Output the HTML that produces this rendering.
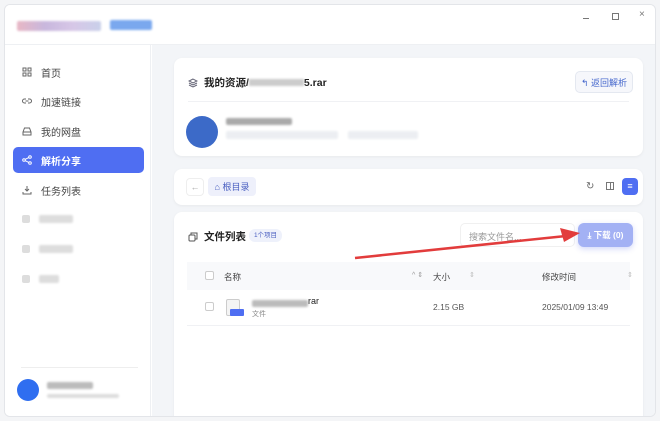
<!DOCTYPE html>
<html><head><meta charset="utf-8"><style>
*{box-sizing:border-box;margin:0;padding:0}
html,body{overflow:hidden}
body{width:660px;height:421px;background:#f4f5f7;font-family:"Liberation Sans","Noto Sans CJK SC",sans-serif;position:relative;color:#333}
.win{position:absolute;left:4px;top:4px;width:652px;height:413px;background:#fff;border:1px solid #e3e5e9;border-radius:6px;overflow:hidden}
.title{position:absolute;left:0;top:0;width:100%;height:40px;border-bottom:1px solid #eef0f3;background:#fff}
.blur{position:absolute;border-radius:2px}
.side{position:absolute;left:0;top:40px;width:146px;bottom:0;background:#fff;border-right:1px solid #eef0f3}
.nav{position:absolute;left:8px;width:131px;height:26px;border-radius:5px;font-size:10px;color:#444;display:flex;align-items:center;padding-left:9px}
.nav svg{margin-right:9px}
.nav.act{background:#4f6ef2;color:#fff;font-weight:bold}
.main{position:absolute;left:147px;top:40px;right:0;bottom:0;background:#f3f5f8;overflow:hidden}
.card{position:absolute;left:22px;width:469px;background:#fff;border-radius:8px;box-shadow:0 1px 3px rgba(0,0,0,.05)}
.th{font-size:8.5px;color:#444}
</style></head><body>
<div class="win">
 <div class="title">
  <div class="blur" style="left:12px;top:16px;width:84px;height:10px;background:linear-gradient(90deg,#e8b7c5,#c8b7dd,#d7c7e7,#c9d0ea);filter:blur(1px)"></div>
  <div class="blur" style="left:105px;top:15px;width:42px;height:10px;background:#7aa8ee;filter:blur(1px)"></div>
  <div style="position:absolute;left:578px;top:13px;width:6px;border-top:1px solid #777"></div>
  <div style="position:absolute;left:607px;top:8px;width:7px;height:7px;border:1px solid #777"></div>
  <div style="position:absolute;left:634px;top:4px;font-size:10px;color:#777">×</div>
 </div>
 <div class="side">
  <div class="nav" style="top:14px"><svg width="10" height="10" viewBox="0 0 10 10" fill="none" stroke="#666" stroke-width="1"><rect x="1" y="1" width="3" height="3"/><rect x="6" y="1" width="3" height="3"/><rect x="1" y="6" width="3" height="3"/><rect x="6" y="6" width="3" height="3"/></svg>首页</div>
  <div class="nav" style="top:43px"><svg width="10" height="10" viewBox="0 0 10 10" fill="none" stroke="#666" stroke-width="1"><path d="M4 3H2.5a2 2 0 000 4H4M6 3h1.5a2 2 0 010 4H6M3.5 5h3"/></svg>加速链接</div>
  <div class="nav" style="top:73px"><svg width="10" height="10" viewBox="0 0 10 10" fill="none" stroke="#666" stroke-width="1"><path d="M1 6l1.5-4h5L9 6v3H1zM1 6h8"/></svg>我的网盘</div>
  <div class="nav act" style="top:102px"><svg width="10" height="10" viewBox="0 0 10 10" fill="none" stroke="#fff" stroke-width="1"><circle cx="2" cy="5" r="1.3"/><circle cx="8" cy="2" r="1.3"/><circle cx="8" cy="8" r="1.3"/><path d="M3 4.4l4-2M3 5.6l4 2"/></svg>解析分享</div>
  <div class="nav" style="top:132px"><svg width="10" height="10" viewBox="0 0 10 10" fill="none" stroke="#666" stroke-width="1"><path d="M5 1v5M3 4l2 2 2-2M1 7v2h8V7"/></svg>任务列表</div>
  <div class="blur" style="left:17px;top:170px;width:8px;height:8px;background:#ddd"></div><div class="blur" style="left:34px;top:170px;width:34px;height:8px;background:#ddd;filter:blur(1px)"></div>
  <div class="blur" style="left:17px;top:200px;width:8px;height:8px;background:#ddd"></div><div class="blur" style="left:34px;top:200px;width:34px;height:8px;background:#ddd;filter:blur(1px)"></div>
  <div class="blur" style="left:17px;top:230px;width:8px;height:8px;background:#ddd"></div><div class="blur" style="left:34px;top:230px;width:20px;height:8px;background:#ddd;filter:blur(1px)"></div>
  <div style="position:absolute;left:16px;right:12px;top:322px;border-top:1px solid #eee"></div>
  <div style="position:absolute;left:12px;top:334px;width:22px;height:22px;border-radius:50%;background:#2f6ef0"></div>
  <div class="blur" style="left:42px;top:337px;width:46px;height:7px;background:#bbb;filter:blur(1px)"></div>
  <div class="blur" style="left:42px;top:349px;width:72px;height:4px;background:#ddd;filter:blur(1px)"></div>
 </div>
 <div class="main">
  <div class="card" style="top:13px;height:98px">
   <div style="position:absolute;left:14px;top:17px;font-size:10.5px;font-weight:bold;color:#222;display:flex;align-items:center"><svg width="10" height="10" viewBox="0 0 10 10" fill="none" stroke="#667" stroke-width="1" style="margin-right:6px"><path d="M5 1L1 3l4 2 4-2zM1 5l4 2 4-2M1 7l4 2 4-2"/></svg>我的资源/<span style="display:inline-block;width:55px;height:7px;background:#ccc;filter:blur(1px)"></span>5.rar</div>
   <div style="position:absolute;left:401px;top:13px;width:58px;height:22px;border:1px solid #e4e8f0;border-radius:5px;background:#f6f7fb;font-size:9px;color:#4466cc;display:flex;align-items:center;justify-content:center">↰ 返回解析</div>
   <div style="position:absolute;left:14px;right:14px;top:43px;border-top:1px solid #f0f1f4"></div>
   <div style="position:absolute;left:12px;top:58px;width:32px;height:32px;border-radius:50%;background:#3c6ac8"></div>
   <div class="blur" style="left:52px;top:60px;width:66px;height:7px;background:#aaa;filter:blur(1px)"></div>
   <div class="blur" style="left:52px;top:73px;width:112px;height:8px;background:#eceef2;filter:blur(1px)"></div>
   <div class="blur" style="left:174px;top:73px;width:70px;height:8px;background:#eceef2;filter:blur(1px)"></div>
  </div>
  <div class="card" style="top:124px;height:36px">
   <div style="position:absolute;left:12px;top:9px;width:18px;height:18px;border:1px solid #eee;border-radius:4px;color:#aaa;font-size:9px;text-align:center;line-height:16px">←</div>
   <div style="position:absolute;left:34px;top:8px;width:48px;height:19px;background:#eef0fb;border-radius:4px;font-size:9px;color:#4a5fc0;display:flex;align-items:center;justify-content:center">⌂ 根目录</div>
   <div style="position:absolute;left:412px;top:12px;font-size:10px;color:#666">↻</div>
   <div style="position:absolute;left:432px;top:13px;width:8px;height:8px;border:1px solid #777;background:linear-gradient(#777,#777) 3px 0/1px 100% no-repeat"></div>
   <div style="position:absolute;left:448px;top:9px;width:16px;height:17px;background:#4f6ef2;border-radius:4px;color:#fff;font-size:9px;text-align:center;line-height:17px">≡</div>
  </div>
  <div class="card" style="top:167px;height:220px">
   <div style="position:absolute;left:14px;top:17px;font-size:10.5px;font-weight:bold;color:#222;display:flex;align-items:center"><svg width="10" height="10" viewBox="0 0 10 10" fill="none" stroke="#555" stroke-width="1" style="margin-right:6px"><rect x="1" y="3" width="6" height="6" rx="1"/><path d="M3 3V1h6v6H7"/></svg>文件列表</div>
   <div style="position:absolute;left:75px;top:17px;width:33px;height:13px;background:#eef1fb;border-radius:6px;font-size:6.5px;color:#4a5fc0;text-align:center;line-height:13px">1个项目</div>
   <div style="position:absolute;left:286px;top:11px;width:115px;height:24px;border:1px solid #f0f0f0;border-radius:5px;font-size:9px;color:#999;padding:6px 8px">搜索文件名...</div>
   <div style="position:absolute;left:404px;top:11px;width:55px;height:24px;background:#a3b1f4;border-radius:6px;color:#fff;font-size:8.5px;font-weight:bold;display:flex;align-items:center;justify-content:center;box-shadow:0 2px 6px rgba(80,100,230,.25)">⤓ 下载 (0)</div>
   <div style="position:absolute;left:13px;right:13px;top:50px;height:28px;background:#f8f9fb"></div>
   <div style="position:absolute;left:31px;top:59px;width:9px;height:9px;border:1px solid #ccc;border-radius:2px;background:#fff"></div>
   <div class="th" style="position:absolute;left:50px;top:59px">名称</div>
   <div style="position:absolute;left:238px;top:59px;font-size:7px;color:#999">^ ⇕</div>
   <div class="th" style="position:absolute;left:259px;top:59px">大小</div>
   <div style="position:absolute;left:295px;top:59px;font-size:7px;color:#bbb">⇕</div>
   <div class="th" style="position:absolute;left:368px;top:59px">修改时间</div>
   <div style="position:absolute;left:453px;top:59px;font-size:7px;color:#bbb">⇕</div>
   <div style="position:absolute;left:31px;top:90px;width:9px;height:9px;border:1px solid #ccc;border-radius:2px"></div>
   <div style="position:absolute;left:52px;top:87px;width:14px;height:17px;border:1px solid #ccc;border-radius:2px;background:#f4f4f4"></div>
   <div style="position:absolute;left:56px;top:97px;width:14px;height:7px;background:#4f6ef2;border-radius:1px"></div>
   <div class="blur" style="left:78px;top:88px;width:56px;height:7px;background:#bbb;filter:blur(1px)"></div>
   <div style="position:absolute;left:134px;top:84px;font-size:9px;color:#222">rar</div>
   <div style="position:absolute;left:78px;top:97px;font-size:7px;color:#888">文件</div>
   <div style="position:absolute;left:259px;top:90px;font-size:8.5px;color:#555">2.15 GB</div>
   <div style="position:absolute;left:368px;top:90px;font-size:8.5px;color:#555">2025/01/09 13:49</div>
   <div style="position:absolute;left:13px;right:13px;top:113px;border-top:1px solid #f0f1f4"></div>
  </div>
 </div>
</div>
<svg style="position:absolute;left:0;top:0" width="660" height="421"><path d="M355 258 L566 236" stroke="#e23c3c" stroke-width="2.5"/><path d="M580 233 L560 228 L564 242 Z" fill="#e23c3c"/></svg>
</body></html>
